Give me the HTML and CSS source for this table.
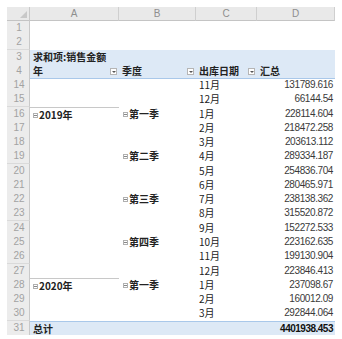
FILE: index.html
```html
<!DOCTYPE html>
<html>
<head>
<meta charset="utf-8">
<link rel="stylesheet" href="styles.css">
</head>
<body>
<div class="sheet">
  <div class="row hdr">
    <div class="rn corner"><svg width="7" height="7" viewBox="0 0 7 7"><polygon points="7,0 7,7 0,7" fill="#c8c8c8"/></svg></div>
    <div class="ch">A</div><div class="ch">B</div><div class="ch">C</div><div class="ch">D</div>
  </div>
  <div class="row"><div class="rn">1</div><div class="c"></div><div class="c"></div><div class="c"></div><div class="c"></div></div>
  <div class="row"><div class="rn">2</div><div class="c"></div><div class="c"></div><div class="c"></div><div class="c"></div></div>
  <div class="row pv"><div class="rn">3</div><div class="c cj b">求和项:销售金额</div><div class="c"></div><div class="c"></div><div class="c"></div></div>
  <div class="row pv ph"><div class="rn">4</div>
    <div class="c cj b dd">年<span class="drop"></span></div>
    <div class="c cj b dd">季度<span class="drop"></span></div>
    <div class="c cj b dd">出库日期<span class="drop"></span></div>
    <div class="c cj b">汇总</div>
  </div>
  <div class="row"><div class="rn">14</div><div class="c"></div><div class="c"></div><div class="c cj">11月</div><div class="c n">131789.616</div></div>
  <div class="row"><div class="rn">15</div><div class="c"></div><div class="c"></div><div class="c cj">12月</div><div class="c n">66144.54</div></div>
  <div class="row"><div class="rn">16</div><div class="c cj b grp"><span class="mb"></span>2019年</div><div class="c cj b q"><span class="mb"></span>第一季</div><div class="c cj">1月</div><div class="c n">228114.604</div></div>
  <div class="row"><div class="rn">17</div><div class="c"></div><div class="c"></div><div class="c cj">2月</div><div class="c n">218472.258</div></div>
  <div class="row"><div class="rn">18</div><div class="c"></div><div class="c"></div><div class="c cj">3月</div><div class="c n">203613.112</div></div>
  <div class="row"><div class="rn">19</div><div class="c"></div><div class="c cj b q"><span class="mb"></span>第二季</div><div class="c cj">4月</div><div class="c n">289334.187</div></div>
  <div class="row"><div class="rn">20</div><div class="c"></div><div class="c"></div><div class="c cj">5月</div><div class="c n">254836.704</div></div>
  <div class="row"><div class="rn">21</div><div class="c"></div><div class="c"></div><div class="c cj">6月</div><div class="c n">280465.971</div></div>
  <div class="row"><div class="rn">22</div><div class="c"></div><div class="c cj b q"><span class="mb"></span>第三季</div><div class="c cj">7月</div><div class="c n">238138.362</div></div>
  <div class="row"><div class="rn">23</div><div class="c"></div><div class="c"></div><div class="c cj">8月</div><div class="c n">315520.872</div></div>
  <div class="row"><div class="rn">24</div><div class="c"></div><div class="c"></div><div class="c cj">9月</div><div class="c n">152272.533</div></div>
  <div class="row"><div class="rn">25</div><div class="c"></div><div class="c cj b q"><span class="mb"></span>第四季</div><div class="c cj">10月</div><div class="c n">223162.635</div></div>
  <div class="row"><div class="rn">26</div><div class="c"></div><div class="c"></div><div class="c cj">11月</div><div class="c n">199130.904</div></div>
  <div class="row"><div class="rn">27</div><div class="c"></div><div class="c"></div><div class="c cj">12月</div><div class="c n">223846.413</div></div>
  <div class="row"><div class="rn">28</div><div class="c cj b grp"><span class="mb"></span>2020年</div><div class="c cj b q"><span class="mb"></span>第一季</div><div class="c cj">1月</div><div class="c n">237098.67</div></div>
  <div class="row"><div class="rn">29</div><div class="c"></div><div class="c"></div><div class="c cj">2月</div><div class="c n">160012.09</div></div>
  <div class="row"><div class="rn">30</div><div class="c"></div><div class="c"></div><div class="c cj">3月</div><div class="c n">292844.064</div></div>
  <div class="row pv tot"><div class="rn">31</div><div class="c cj b">总计</div><div class="c"></div><div class="c"></div><div class="c n b">4401938.453</div></div>
</div>
</body>
</html>
```
FILE: styles.css
```css
html, body {
  margin: 0;
  padding: 0;
  background: #ffffff;
}
body {
  padding: 7px 0 0 7px;
  font-family: "Liberation Sans", "Noto Sans CJK SC", sans-serif;
  color: #333;
}
.sheet {
  display: grid;
  grid-template-rows: 14px;
  grid-auto-rows: 14.28px;
  width: 328px;
}
.row {
  display: grid;
  grid-template-columns: 23px 89px 77px 61px 78px;
}
.rn {
  background: #ececec;
  border-right: 1px solid #c9c9c9;
  border-bottom: 1px solid #dadada;
  color: #a2a2a2;
  font-size: 10px;
  line-height: 14px;
  text-align: center;
  box-sizing: border-box;
  padding-left: 2px;
}
.hdr .rn, .hdr .ch {
  background: #e9e9e9;
  border-bottom: 1px solid #c4c4c4;
}
.corner {
  display: flex;
  align-items: flex-end;
  justify-content: flex-end;
  padding: 0 2px 2px 0;
}
.ch {
  color: #8e8e8e;
  font-size: 10px;
  line-height: 13px;
  text-align: center;
  border-right: 1px solid #cfcfcf;
  box-sizing: border-box;
}
.c {
  position: relative;
  font-size: 10px;
  line-height: 14px;
  padding-left: 3px;
  white-space: nowrap;
  overflow: visible;
  box-sizing: border-box;
}
.cj {
  font-family: "Noto Sans CJK SC", sans-serif;
  font-size: 10px;
  color: #222;
}
.b { font-weight: 700; }
.n {
  text-align: right;
  padding: 0 2px 0 0;
  letter-spacing: -0.4px;
  color: #3a3a3a;
}
.n.b { color: #111; letter-spacing: -0.5px; }
.pv .c { background: #dde9f6; }
.ph .c { border-bottom: 1px solid #a9c8ea; }
.tot .c { border-top: 1px solid #a9c8ea; }
.grp { border-top: 1px solid #c8c8c8; }
.q { padding-left: 4px; }
.dd { padding-right: 10px; }
.drop {
  position: absolute;
  right: 2px;
  top: 4px;
  width: 7px;
  height: 7px;
  box-sizing: border-box;
  border: 1px solid #b5b5b5;
  background: #fff;
}
.drop::after {
  content: "";
  position: absolute;
  left: 1px;
  top: 2px;
  border-left: 2px solid transparent;
  border-right: 2px solid transparent;
  border-top: 2px solid #555;
}
.mb {
  display: inline-block;
  width: 5px;
  height: 5px;
  border: 1px solid #b0b0b0;
  position: relative;
  margin-right: 1px;
  vertical-align: 1px;
  box-sizing: border-box;
}
.mb::after {
  content: "";
  position: absolute;
  left: 0;
  top: 1px;
  width: 3px;
  height: 1px;
  background: #888;
}
```
